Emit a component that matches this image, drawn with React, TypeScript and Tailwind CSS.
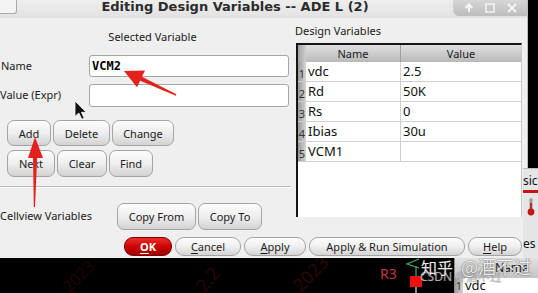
import { ReactNode } from 'react';

// ADE L "Editing Design Variables" dialog, with a sliver of schematic below it

const rows = [
	['vdc', '2.5'],
	['Rd', '50K'],
	['Rs', '0'],
	['Ibias', '30u'],
	['VCM1', ''],
];

type BtnProps = {
	children: ReactNode;
	className?: string;
};

function Btn({ children, className = '' }: BtnProps) {
	return (
		<div
			className={`flex items-center justify-center rounded-[7px] border border-[#a4a4a4] bg-linear-to-b from-[#fdfdfd] via-[#eeeeee] to-[#d3d3d3] text-[11px] leading-none text-[#1c1c1c] ${className}`}>
			{children}
		</div>
	);
}

function PillBtn({ children, className = '' }: BtnProps) {
	return (
		<div
			className={`flex h-[19px] items-center justify-center rounded-[9px] border border-[#a4a4a4] bg-linear-to-b from-[#fdfdfd] via-[#efefef] to-[#d4d4d4] text-[11px] leading-none text-[#1c1c1c] ${className}`}>
			{children}
		</div>
	);
}

function WindowIcons() {
	return (
		<svg width="60" height="12" viewBox="0 0 60 12" fill="none">
			<path d="M9 10V3M5.5 6L9 2.5 12.5 6" stroke="#f6f6f6" strokeWidth="2" />
			<rect x="26" y="2" width="8" height="8" stroke="#f6f6f6" strokeWidth="1.4" />
			<rect x="28" y="4" width="4" height="4" stroke="#c9c9c9" strokeWidth="0.8" />
			<path d="M48 2l8 8M56 2l-8 8" stroke="#f6f6f6" strokeWidth="1.8" />
		</svg>
	);
}

function Overlay() {
	return (
		<svg
			className="pointer-events-none absolute left-0 top-0"
			width="538"
			height="293"
			viewBox="0 0 538 293">
			{/* mouse pointer */}
			<path
				d="M75 101L75 116.5 78.8 113 81.8 119.2 84.2 118.2 81.4 112.3 86.2 112.3Z"
				fill="#111"
				stroke="#fff"
				strokeWidth="0.8"
			/>
			{/* arrow to the name field */}
			<path d="M124 71L145 70.4 137 87.2Z" fill="#e3221d" />
			<path d="M141.4 76.4L139.6 80.6 175.8 95.8 176.4 94.2Z" fill="#e3221d" />
			{/* arrow to Add */}
			<path d="M35 137L43 158 28 158Z" fill="#e3221d" />
			<path d="M33 157L37.2 157 35 207 33.8 207Z" fill="#e3221d" />
		</svg>
	);
}

export default function App() {
	return (
		<div className="relative h-[293px] w-[538px] overflow-hidden bg-black font-['Noto_Sans','Open_Sans',sans-serif] text-[11px] text-[#1a1a1a]">
			<div className="flex h-[258px]">
				<div className="flex w-[528px] flex-col border-r border-[#bcbcbc] bg-[#efefef]">
					{/* title bar */}
					<div className="flex h-[18px] items-start bg-linear-to-b from-[#eeeeee] to-[#e2e2e2]">
						<div className="h-[14px] w-[17px] rounded-br-[3px] border-r border-b border-[#a9a9a9] bg-[#f4f4f4]" />
						<div className="flex-1 text-center font-['DejaVu_Sans',sans-serif] text-[13px] font-bold leading-[13px] text-[#2b2b2b]">
							Editing Design Variables -- ADE L (2)
						</div>
						<div className="flex h-[16px] w-[74px] items-center justify-center rounded-bl-[6px] bg-linear-to-b from-[#d5d5d5] to-[#bdbdbd]">
							<WindowIcons />
						</div>
					</div>

					<div className="flex h-[215px]">
						{/* selected variable side */}
						<div className="flex w-[295px] flex-col">
							<div className="mt-[11px] h-[16px] pl-[10px] text-center leading-[16px]">
								Selected Variable
							</div>
							<div className="mt-[10px] flex h-[22px] items-center">
								<div className="w-[89px] pl-[1px]">Name</div>
								<div className="flex h-full w-[200px] items-center rounded-[3px] border border-[#a6a6a6] bg-white pl-[2px] font-['DejaVu_Sans_Mono',monospace] text-[12px] font-bold text-black">
									VCM2
								</div>
							</div>
							<div className="mt-[7px] flex h-[23px] items-center">
								<div className="w-[89px]">Value (Expr)</div>
								<div className="h-full w-[200px] rounded-[3px] border border-[#a6a6a6] bg-white" />
							</div>
							<div className="mt-[13px] flex h-[26px] gap-[2px] pl-[7px]">
								<Btn className="w-[44px]">Add</Btn>
								<Btn className="w-[57px]">Delete</Btn>
								<Btn className="w-[62px]">Change</Btn>
							</div>
							<div className="mt-[4px] flex h-[27px] gap-[2px] pl-[7px]">
								<Btn className="w-[48px]">Next</Btn>
								<Btn className="w-[50px]">Clear</Btn>
								<Btn className="w-[44px]">Find</Btn>
							</div>
							<div className="mt-[9px] h-px w-[291px] bg-[#bababa] shadow-[0_1px_0_#ffffff]" />
							<div className="mt-[16px] flex h-[27px] items-center">
								<div className="w-[117px]">Cellview Variables</div>
								<div className="flex h-full gap-[2px]">
									<Btn className="w-[79px]">Copy From</Btn>
									<Btn className="w-[64px]">Copy To</Btn>
								</div>
							</div>
						</div>

						{/* design variables table */}
						<div className="flex flex-1 flex-col">
							<div className="mt-[5px] h-[15px] leading-[15px]">Design Variables</div>
							<div className="ml-[1px] mt-[5px] flex h-[174px] w-[226px] flex-col border-t-2 border-l-2 border-r border-t-[#151515] border-l-[#151515] border-r-[#c6c6c6] bg-white">
								<div className="flex h-[17px] bg-linear-to-b from-[#e0e0e0] to-[#b9b9b9] leading-[17px]">
									<div className="w-[8px] bg-linear-to-r from-[#a3a3a3] to-[#cfcfcf]" />
									<div className="w-[95px] border-r border-[#a0a0a0] text-center">Name</div>
									<div className="flex-1 text-center">Value</div>
								</div>
								{rows.map(([name, value], i) => (
									<div
										key={name}
										className="flex h-[20px] border-b border-[#cfcfcf] text-[13px] leading-[19px] text-[#111]">
										<div className="flex w-[8px] items-end justify-center bg-linear-to-r from-[#9a9a9a] to-[#d6d6d6] pb-[1px] text-[11px] leading-[12px] text-[#333]">
											{i + 1}
										</div>
										<div className="w-[95px] border-r border-[#cfcfcf] pl-[2px]">{name}</div>
										<div className="flex-1 pl-[2px]">{value}</div>
									</div>
								))}
							</div>
						</div>
					</div>

					{/* dialog buttons */}
					<div className="flex h-[25px] items-start gap-[3px] pl-[124px] pt-[4px]">
						<div className="flex h-[19px] w-[48px] items-center justify-center rounded-[9px] border border-[#7a0000] bg-linear-to-b from-[#ee2a2a] via-[#cc0000] to-[#a00000] text-[11px] font-bold leading-none text-white">
							<span className="underline underline-offset-2">O</span>K
						</div>
						<PillBtn className="w-[66px]">
							<span className="underline underline-offset-2">C</span>ancel
						</PillBtn>
						<PillBtn className="w-[62px]">
							<span className="underline underline-offset-2">A</span>pply
						</PillBtn>
						<PillBtn className="w-[156px]">Apply &amp; Run Simulation</PillBtn>
						<PillBtn className="w-[54px]">
							<span className="underline underline-offset-2">H</span>elp
						</PillBtn>
					</div>
				</div>
			</div>

			{/* schematic behind the dialog */}
			<div className="relative h-[35px] overflow-hidden">
				<span className="absolute left-[60px] top-[6px] -rotate-45 text-[16px] text-[#220404]">2023</span>
				<span className="absolute left-[195px] top-[8px] -rotate-50 text-[18px] text-[#2a0505]">2.2</span>
				<span className="absolute left-[290px] top-[2px] -rotate-45 text-[18px] text-[#2e0606]">2023</span>
				<span className="absolute left-[380px] top-[-12px] text-[14px] leading-[14px] text-[#6b7a6b]">R3</span>
				<span className="absolute left-[380px] top-[9px] text-[14px] leading-[14px] text-[#c03c3c]">R3</span>
				<svg className="absolute left-0 top-0" width="538" height="35" viewBox="0 0 538 35">
					<path d="M419 1L407 6 419 10" stroke="#3fae5f" strokeWidth="1.2" fill="none" />
					<path d="M416 8V18" stroke="#3fae5f" strokeWidth="1.2" />
					<rect x="410" y="18" width="12" height="11" fill="#ee1111" />
					<path d="M416 29V35" stroke="#e8e8e8" strokeWidth="1.2" />
				</svg>
				<div className="absolute left-[454px] top-0 flex h-[35px] w-[84px] flex-col border-l border-[#8c8c8c] bg-white">
					<div className="h-[20px] bg-linear-to-b from-[#e2e2e2] to-[#c4c4c4] pl-[40px] text-[12px] leading-[20px] text-[#222]">
						Name
					</div>
					<div className="flex flex-1 text-[13px] leading-[15px] text-[#111]">
						<div className="w-[8px] bg-linear-to-r from-[#9a9a9a] to-[#d6d6d6] text-center text-[11px] leading-[16px] text-[#333]">
							1
						</div>
						<div className="pl-[2px]">vdc</div>
					</div>
				</div>
				<span className="absolute left-[420px] top-[13px] text-[12px] leading-[12px] text-white/55 [text-shadow:0_0_1px_#555]">
					CSDN @酒不过
				</span>
				<span className="absolute left-[421px] top-[-1px] font-['Noto_Sans_CJK_SC',sans-serif] text-[16px] leading-[20px] text-white/90 [text-shadow:0_0_1px_#333]">
					知乎
				</span>
				<span className="absolute left-[461px] top-[-2px] font-['Noto_Sans_CJK_SC',sans-serif] text-[18px] leading-[20px] text-white/90 [text-shadow:0_0_1.5px_#222]">
					@酒不过
				</span>
			</div>

			{/* another window peeking out on the right */}
			<div className="absolute left-[523px] top-[168px] h-[90px] w-[15px] overflow-hidden border-t border-[#b9b9b9] bg-[#e5e5e5]">
				<div className="mt-[5px] whitespace-nowrap text-[12px] leading-[14px] text-[#111]">sic</div>
				<div className="mt-[2px] h-[3px] bg-[#c41414]" />
				<svg className="ml-[4px] mt-[5px]" width="8" height="18" viewBox="0 0 8 18">
					<rect x="2.5" y="0" width="3" height="12" rx="1.5" fill="#9a9a9a" />
					<rect x="3.2" y="5" width="1.6" height="8" fill="#c41414" />
					<circle cx="4" cy="14" r="3.4" fill="#c41414" />
				</svg>
				<div className="mt-[21px] text-[12px] leading-[14px] text-[#111]">es</div>
			</div>

			<Overlay />
		</div>
	);
}
